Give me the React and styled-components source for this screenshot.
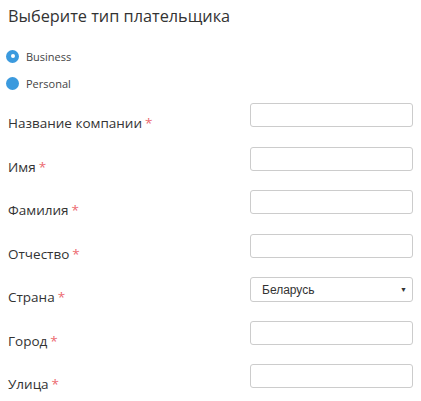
import React from 'react'
import styled, { createGlobalStyle } from 'styled-components'

const GlobalStyle = createGlobalStyle`
  body {
    margin: 0;
    background: #fff;
    font-family: 'Open Sans', sans-serif;
  }
`

const Page = styled.div`
  width: 421px;
  padding: 0 8px;
  box-sizing: border-box;
`

const Title = styled.h2`
  margin: 0;
  padding-top: 4px;
  font-size: 16.3px;
  font-weight: 400;
  line-height: 24px;
  color: #333;
`

const RadioGroup = styled.div`
  display: flex;
  flex-direction: column;
  gap: 7px;
  margin-top: 18px;
`

const RadioRow = styled.label`
  display: flex;
  align-items: center;
  gap: 7px;
  height: 20px;
  font-size: 11px;
  color: #444;
`

const Dot = styled.span`
  width: 13px;
  height: 13px;
  border-radius: 50%;
  background: #3b9ade;
  margin-left: -2px;
  display: flex;
  align-items: center;
  justify-content: center;
  &::after {
    content: '';
    width: 4px;
    height: 4px;
    border-radius: 50%;
    background: ${(p) => (p.checked ? '#fff' : 'transparent')};
  }
`

const Form = styled.div`
  margin-top: 6px;
`

const Row = styled.div`
  display: flex;
  justify-content: space-between;
  align-items: flex-start;
  height: 43.5px;
`

const Label = styled.div`
  padding-top: 14px;
  font-size: 13.5px;
  line-height: 20px;
  color: #333;
`

const Star = styled.span`
  color: #ec6a70;
  margin-left: 3px;
`

const Input = styled.div`
  width: 163px;
  height: 24px;
  margin-top: 4px;
  border: 1px solid #ccc;
  border-radius: 3px;
  box-sizing: border-box;
  background: #fff;
`

const Select = styled(Input)`
  height: 25px;
  display: flex;
  align-items: center;
  justify-content: space-between;
  padding: 0 5px 0 11px;
  font-family: 'Liberation Sans', Arial, sans-serif;
  font-size: 12px;
  color: #333;
`

const Caret = styled.span`
  font-size: 7px;
  color: #333;
`

const fields = [
  'Название компании',
  'Имя',
  'Фамилия',
  'Отчество',
  'Страна',
  'Город',
  'Улица',
]

export default function App() {
  return (
    <Page>
      <GlobalStyle />
      <Title>Выберите тип плательщика</Title>
      <RadioGroup>
        <RadioRow>
          <Dot checked />
          Business
        </RadioRow>
        <RadioRow>
          <Dot />
          Personal
        </RadioRow>
      </RadioGroup>
      <Form>
        {fields.map((f) => (
          <Row key={f}>
            <Label>
              {f}
              <Star>*</Star>
            </Label>
            {f === 'Страна' ? (
              <Select>
                Беларусь
                <Caret>▼</Caret>
              </Select>
            ) : (
              <Input />
            )}
          </Row>
        ))}
      </Form>
    </Page>
  )
}
